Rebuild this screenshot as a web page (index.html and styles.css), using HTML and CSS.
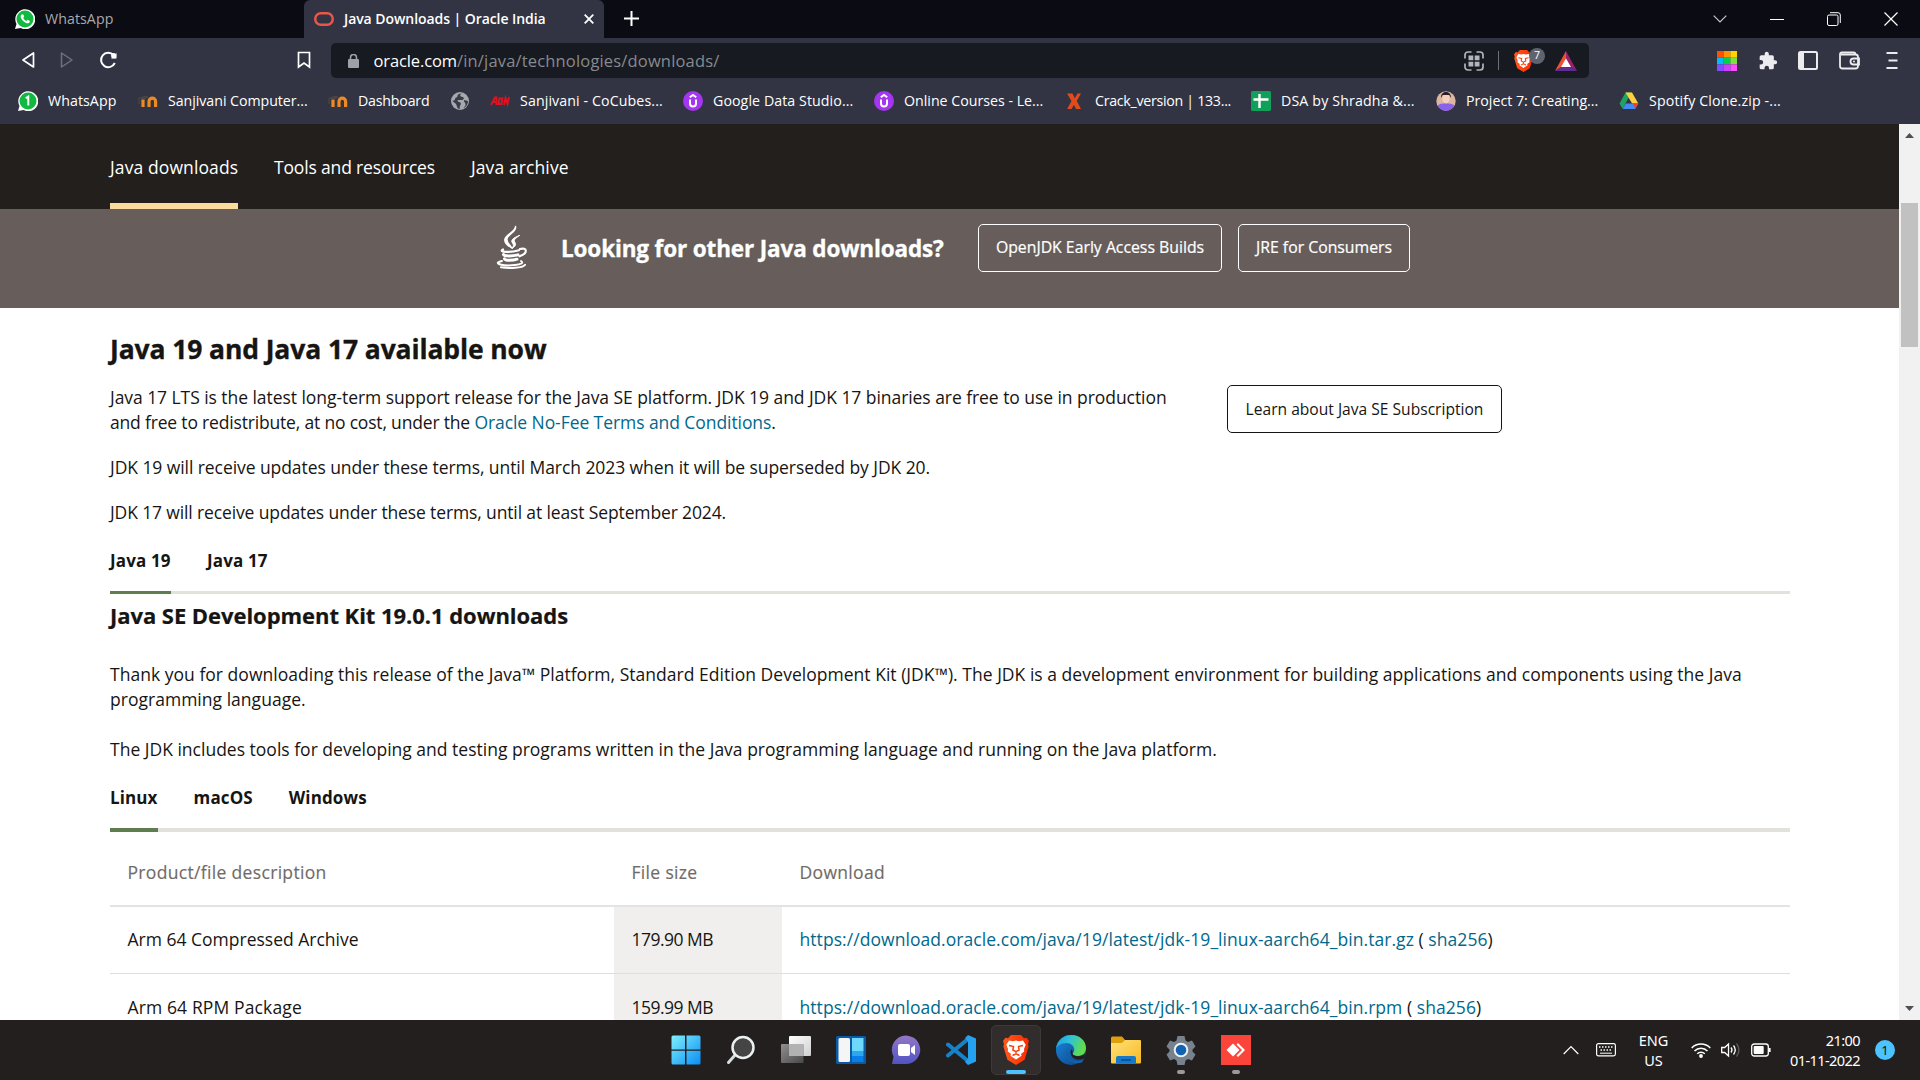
FILE: index.html
```html
<!DOCTYPE html>
<html lang="en">
<head>
<meta charset="utf-8">
<title>Java Downloads | Oracle India</title>
<link rel="stylesheet" href="styles.css">
</head>
<body>
<svg class="defs" width="0" height="0">
  <defs>
    <linearGradient id="gWin" x1="0" y1="0" x2="1" y2="1"><stop offset="0" stop-color="#7ff0fc"/><stop offset="1" stop-color="#0a8df5"/></linearGradient>
    <linearGradient id="gChat" x1="0" y1="0" x2="0" y2="1"><stop offset="0" stop-color="#9476c6"/><stop offset="1" stop-color="#4f54c4"/></linearGradient>
    <linearGradient id="gEdge" x1="0" y1="0" x2="1" y2=".3"><stop offset="0" stop-color="#1d9be8"/><stop offset=".5" stop-color="#2fc3d6"/><stop offset="1" stop-color="#61dd4c"/></linearGradient>
    <linearGradient id="gEdge2" x1="0" y1="0" x2="1" y2="1"><stop offset="0" stop-color="#1989dc"/><stop offset="1" stop-color="#0c3f86"/></linearGradient>
    <linearGradient id="gFold" x1="0" y1="0" x2="1" y2="1"><stop offset="0" stop-color="#ffe27a"/><stop offset="1" stop-color="#f9b824"/></linearGradient>
    <linearGradient id="gLight" x1="0" y1="0" x2="1" y2="1"><stop offset="0" stop-color="#fff"/><stop offset="1" stop-color="#cfcfcf"/></linearGradient>
    <linearGradient id="gDark" x1="0" y1="0" x2="1" y2="1"><stop offset="0" stop-color="#9a9a9a"/><stop offset="1" stop-color="#4c4c4c"/></linearGradient>
    <linearGradient id="gBrave" x1="0" y1="0" x2="1" y2="0"><stop offset="0" stop-color="#ff5a1f"/><stop offset="1" stop-color="#fa2a00"/></linearGradient>
    <symbol id="brave" viewBox="0 0 26 30">
      <path fill="url(#gBrave)" d="M8 0h10l3 3.200 2.600-.4L26 6l-1 3 .6 2.600-4 13.200L13 30l-8.600-5.200-4-13.200L1 9 0 6l2.400-3.200 2.600.4z"/>
      <path fill="#fff" d="M6 5.500l4 .7 3-.7 3 .7 4-.7 2.700 4.200-1.700 4.300.2 2.600-3.200 2.500.6 1.700L13 24.500l-5.600-3.700.6-1.700-3.200-2.500.2-2.600-1.700-4.300z"/>
      <path fill="none" stroke="#f9400d" stroke-width="1.500" d="M6 10.500l4.500 1-.6 3.500 3.100 1.600 3.100-1.600-.6-3.500 4.500-1M13 16v3M9.500 20.500l3.500-1.700 3.500 1.700"/>
    </symbol>
    <symbol id="udemy" viewBox="0 0 20 20"><circle cx="10" cy="10" r="10" fill="#a435f0"/><path d="M6.800 6.200L10 4l3.200 2.200M7 8.500v4a3 3 0 0 0 6 0v-4" fill="none" stroke="#fff" stroke-width="2"/></symbol>
    <symbol id="moodle" viewBox="0 0 20 20"><path d="M5 16V8.500M11 16v-5.500a3.300 3.300 0 0 1 6.600 0V16" fill="none" stroke="#ed8a24" stroke-width="3.200"/><path d="M0 7l8-2.500 3 1.700L6 8.500z" fill="#4a4643"/><path d="M1 7v6" stroke="#4f4844"/></symbol>
  </defs>
</svg>

<header class="browser">
  <div class="tabstrip">
    <div class="tab">
      <svg width="20" height="20" viewBox="0 0 20 20"><path d="M0 20l1.500-5A10 10 0 1 1 5.500 19z" fill="#fff"/><circle cx="10" cy="10" r="8.500" fill="#12b941"/><path d="M6.500 5.500c-2 2 0 5 2 6.700s4.500 3 6 1.300l.3-1.500-2.200-1.200-1.100 1.200c-1.500-.5-2.800-1.800-3.300-3.200l1-1-.8-2.300z" fill="#fff"/></svg>
      <span>WhatsApp</span>
    </div>
    <div class="tab active">
      <svg width="20" height="14" viewBox="0 0 20 14"><rect x="1.300" y="1.300" width="17.400" height="11.400" rx="5.500" fill="none" stroke="#e8574a" stroke-width="2.500"/></svg>
      <span>Java Downloads | Oracle India</span>
      <svg class="close" width="10" height="10" viewBox="0 0 10 10"><path d="M.7.7l8.600 8.600M9.300.7L.7 9.300" stroke="#fff" stroke-width="1.800"/></svg>
    </div>
    <svg class="plus" width="15" height="15" viewBox="0 0 15 15"><path d="M7.500 0v15M0 7.500h15" stroke="#fff" stroke-width="2"/></svg>
    <div class="winctl">
      <svg width="14" height="14" viewBox="0 0 14 14"><path d="M.7 3.700L7 10l6.300-6.300" fill="none" stroke="#c8c8cc" stroke-width="1.200"/></svg>
      <svg width="14" height="14" viewBox="0 0 14 14"><path d="M0 7.500h14" stroke="#fff"/></svg>
      <svg width="14" height="14" viewBox="0 0 14 14"><rect x=".5" y="3" width="10.500" height="10.500" rx="1.500" fill="none" stroke="#fff"/><path d="M3 .7h8a2.300 2.300 0 0 1 2.300 2.300v8" fill="none" stroke="#fff"/></svg>
      <svg width="14" height="14" viewBox="0 0 14 14"><path d="M.5.5l13 13M13.500.5l-13 13" stroke="#fff" stroke-width="1.200"/></svg>
    </div>
  </div>

  <div class="toolbar">
    <div class="nav-icons">
      <svg width="14" height="18" viewBox="0 0 14 18"><path d="M12.500 2v14L2 9z" fill="none" stroke="#fff" stroke-width="1.700" stroke-linejoin="round"/></svg>
      <svg width="14" height="18" viewBox="0 0 14 18"><path d="M1.500 2v14L12 9z" fill="none" stroke="#6f717c" stroke-width="1.500" stroke-linejoin="round"/></svg>
      <svg width="18" height="18" viewBox="0 0 18 18"><path d="M14.500 4A7.200 7.200 0 1 0 15.800 12" fill="none" stroke="#fff" stroke-width="2"/><path d="M17.500 2v5.500H12z" fill="#fff"/><circle cx="14.700" cy="4.700" r="2.600" fill="#fff"/></svg>
      <svg class="mark" width="14" height="18" viewBox="0 0 14 18"><path d="M1.500 1.500h11v14.500L7 12l-5.500 4z" fill="none" stroke="#fff" stroke-width="1.700"/></svg>
    </div>
    <div class="address">
      <svg width="11" height="14" viewBox="0 0 11 14"><rect y="5" width="11" height="9" rx="1" fill="#9ea1a9"/><path d="M2.500 6V3.500a3 3 0 0 1 6 0V6" fill="none" stroke="#9ea1a9" stroke-width="1.600"/></svg>
      <div class="url"><span class="host">oracle.com</span><span class="path">/in/java/technologies/downloads/</span></div>
      <div class="shields">
        <svg width="20" height="20" viewBox="0 0 20 20"><path d="M7.500 1H4a3 3 0 0 0-3 3v3.500M12.500 1H16a3 3 0 0 1 3 3v3.500M7.500 19H4a3 3 0 0 1-3-3v-3.500M12.500 19H16a3 3 0 0 0 3-3v-3.500" fill="none" stroke="#b4b5ba" stroke-width="1.700"/><path d="M4.500 4.500h4.800v4.800H4.500zM10.700 4.500h4.800v4.800h-4.800zM4.500 10.700h4.800v4.800H4.500zM10.700 10.700h4.800v4.800h-4.800z" fill="#b4b5ba"/></svg>
        <i class="sep"></i>
        <div class="lion"><svg width="19" height="22"><use href="#brave"/></svg><b>7</b></div>
        <svg width="22" height="20" viewBox="0 0 22 20"><path d="M11 0L0 20l11-7z" fill="#f1502f"/><path d="M11 0l11 20-11-7z" fill="#97216b"/><path d="M0 20h22l-11-7z" fill="#5f2d91"/><path d="M11 7.500l5 8.500H6z" fill="#fff"/></svg>
      </div>
    </div>
    <div class="extensions">
      <svg width="20" height="20" viewBox="0 0 21 21"><path fill="#ff4f00" d="M0 0h7v7H0z"/><path fill="#ff9300" d="M7 0h7v7H7z"/><path fill="#ffd500" d="M14 0h7v7h-7z"/><path fill="#00bdf5" d="M0 7h7v7H0z"/><path fill="#00d04c" d="M7 7h7v7H7z"/><path fill="#7fe044" d="M14 7h7v7h-7z"/><path fill="#824dff" d="M0 14h7v7H0z"/><path fill="#c743ff" d="M7 14h7v7H7z"/><path fill="#fb4cff" d="M14 14h7v7h-7z"/></svg>
      <svg width="20" height="20" viewBox="0 0 24 24" fill="#ececee"><path d="M20.500 11H19V7a2 2 0 0 0-2-2h-4V3.500a2.500 2.500 0 0 0-5 0V5H4a2 2 0 0 0-2 2v3.800h1.500a2.700 2.700 0 0 1 0 5.400H2V20a2 2 0 0 0 2 2h3.800v-1.500a2.700 2.700 0 0 1 5.400 0V22H17a2 2 0 0 0 2-2v-4h1.500a2.500 2.500 0 0 0 0-5z"/></svg>
      <svg width="20" height="19" viewBox="0 0 20 19"><rect x="1" y="1" width="18" height="17" rx="1.500" fill="none" stroke="#ececee" stroke-width="2"/><path d="M1 1h5v17H1z" fill="#ececee"/></svg>
      <svg width="21" height="19" viewBox="0 0 21 19"><path d="M2 3.500h14.500a2.500 2.500 0 0 1 2.500 2.500v9a2.500 2.500 0 0 1-2.500 2.500h-13A2.500 2.500 0 0 1 1 15V3.500A2 2 0 0 1 3 1.300h11.500a2 2 0 0 1 2 2M20 7.500h-5.500a3 3 0 0 0 0 6H20z" fill="none" stroke="#ececee" stroke-width="1.800"/><circle cx="15" cy="10.500" r="1" fill="#ececee"/></svg>
      <svg class="menu" width="12" height="17" viewBox="0 0 12 17"><path d="M.5 1h11M2.500 8.500h9M.5 16h11" stroke="#ececee" stroke-width="1.800"/></svg>
    </div>
  </div>

  <div class="bookmarks">
    <div><svg width="20" height="20" viewBox="0 0 20 20"><path d="M0 20l1.500-5A10 10 0 1 1 5.500 19z" fill="#fff"/><circle cx="10" cy="10" r="8.500" fill="#12b941"/><path d="M7.700 7.300l2.600-1.800v9" fill="none" stroke="#fff" stroke-width="1.900"/></svg><span>WhatsApp</span></div>
    <div><svg width="20" height="20"><use href="#moodle"/></svg><span>Sanjivani Computer...</span></div>
    <div><svg width="20" height="20"><use href="#moodle"/></svg><span>Dashboard</span></div>
    <div><svg width="20" height="20" viewBox="0 0 20 20"><circle cx="10" cy="10" r="9" fill="#a6a8ae"/><path d="M12 2.500c-3 1-2 3 .5 3.500s1 3-.5 3H8.500c-1.500 0-1 2 .5 2s2.500 1.500 1.500 3-1 2.500-.5 4c-4-.5-2.500-4-4.500-5.500S2 9.500 2 9.500c1.500.5 3 0 3-1.500s2.500-1.500 2.500-3 1-2.500 4.500-2.500zM14 9l4 1c0 4-2.500 6.500-4.500 7.200 1-2.200 2.500-2.200 2-4.200s-2-2-1.500-4z" fill="#393b48"/></svg></div>
    <div><svg width="20" height="20" viewBox="0 0 20 20"><path d="M1 14L5 6.500h1.500V14M3 11h3.500M9.500 7.500h3l-1 5.500h-3zM14 14l1.500-7 2 6L19 6" fill="none" stroke="#e01222" stroke-width="1.900"/></svg><span>Sanjivani - CoCubes...</span></div>
    <div><svg width="20" height="20"><use href="#udemy"/></svg><span>Google Data Studio...</span></div>
    <div><svg width="20" height="20"><use href="#udemy"/></svg><span>Online Courses - Le...</span></div>
    <div><svg width="20" height="20" viewBox="0 0 20 20"><path d="M2 2.500h5.500l2.300 4.700 2.700-4.700H16l-4.300 7.500 4.300 8h-5l-2-4.300L6.500 18H2.200L6.500 10z" fill="#e14b1c"/></svg><span>Crack_version | 133...</span></div>
    <div><svg width="20" height="20" viewBox="0 0 20 20"><rect width="20" height="20" rx="1.500" fill="#10a05a"/><path d="M8.500 3v14M2.500 8.500h15" stroke="#fff" stroke-width="2.400"/></svg><span>DSA by Shradha &amp;...</span></div>
    <div><svg width="20" height="20" viewBox="0 0 20 20"><circle cx="10" cy="10" r="9.700" fill="#dcb6a0"/><path d="M1.500 14.500C5 11.500 15 11.500 18.500 14.500 15 21.500 5 21.500 1.500 14.500z" fill="#8a62ec"/><ellipse cx="10" cy="7.500" rx="3.700" ry="5" fill="#f2d0bd"/><path d="M5 7C4.500-1 15.500-1 15 7l-1.700-3H6.700z" fill="#2c2028"/></svg><span>Project 7: Creating...</span></div>
    <div><svg width="20" height="20" viewBox="0 0 20 20"><path d="M6.500 1.500h6L7.300 11l-3.500 7L.5 12.500z" fill="#1ea362"/><path d="M6.500 1.500h6.500l6.300 11h-6.200z" fill="#ffcf3f"/><path d="M6.700 12.500h12.500L16.200 18H3.800z" fill="#4688f4"/><path d="M13.500 12.500h5.800L16.500 17.500z" fill="#ea4335"/></svg><span>Spotify Clone.zip -...</span></div>
  </div>
</header>

<div class="viewport">
  <div class="page">
    <nav class="subnav">
      <a class="current">Java downloads</a>
      <a>Tools and resources</a>
      <a>Java archive</a>
    </nav>
    <section class="banner">
      <svg class="java" width="34" height="44" viewBox="0 0 34 44" fill="none" stroke="#fff" stroke-linecap="round">
        <path d="M20.500 1c2.500 5.500-8.500 8.500-8.500 13.500 0 3.500 3.800 5.500 4.800 8.500-4.300-2.200-8.300-5.200-6.800-9.600C11.500 9 20.500 6.500 20.500 1z" fill="#fff" stroke-width="1.100"/>
        <path d="M24.500 10.500c-7 2.500-9 5-7 7.500 1.500 2 1 3.500-.5 5.500 4-2.500 4.200-4.200 2.700-6.500-1.200-2 .3-3.500 4.800-6.500z" fill="#fff" stroke-width="1"/>
        <path d="M8 24.500c-5 2.500 7 3.500 16 .7M25 24c7-2 8.500 4-.5 7.300" stroke-width="2.200"/>
        <path d="M8.500 29.500c1 2 9 1.700 14.500.4M9.500 33.800c1 2 8 1.900 12.500.4" stroke-width="3"/>
        <path d="M7 36c-11 2.500 2 5.300 13 4 6-.5 9-2.200 6-4M6 42.300c9 1.300 21 .8 24-2.500" stroke-width="2"/>
      </svg>
      <h2>Looking for other Java downloads?</h2>
      <a class="btn b1">OpenJDK Early Access Builds</a>
      <a class="btn b2">JRE for Consumers</a>
    </section>

    <main>
      <h1>Java 19 and Java 17 available now</h1>
      <div class="intro">
        <div class="copy">
          <p><span class="l1">Java 17 LTS is the latest long-term support release for the Java SE platform. JDK 19 and JDK 17 binaries are free to use in production</span><br><span class="l2">and free to redistribute, at no cost, under the <a>Oracle No-Fee Terms and Conditions</a>.</span></p>
          <p class="l3">JDK 19 will receive updates under these terms, until March 2023 when it will be superseded by JDK 20.</p>
          <p class="l4">JDK 17 will receive updates under these terms, until at least September 2024.</p>
        </div>
        <a class="btn dark">Learn about Java SE Subscription</a>
      </div>

      <div class="tabs versions"><span class="on">Java 19</span><span>Java 17</span></div>
      <h3>Java SE Development Kit 19.0.1 downloads</h3>
      <p class="thanks">Thank you for downloading this release of the Java™ Platform, Standard Edition Development Kit (JDK™). The JDK is a development environment for building applications and components using the Java<br>programming language.</p>
      <p class="tools">The JDK includes tools for developing and testing programs written in the Java programming language and running on the Java platform.</p>
      <div class="tabs systems"><span class="on">Linux</span><span>macOS</span><span>Windows</span></div>

      <div class="table">
        <div class="row head"><div>Product/file description</div><div>File size</div><div>Download</div></div>
        <div class="row r1"><div>Arm 64 Compressed Archive</div><div class="size">179.90 MB</div><div><a>https://download.oracle.com/java/19/latest/jdk-19_linux-aarch64_bin.tar.gz</a> ( <a>sha256</a>)</div></div>
        <div class="row r2"><div>Arm 64 RPM Package</div><div class="size">159.99 MB</div><div><a>https://download.oracle.com/java/19/latest/jdk-19_linux-aarch64_bin.rpm</a> ( <a>sha256</a>)</div></div>
      </div>
    </main>
  </div>
  <div class="scrollbar">
    <svg width="9" height="5" viewBox="0 0 9 5"><path d="M0 5l4.500-5L9 5z" fill="#505050"/></svg>
    <i class="thumb"></i>
    <svg width="9" height="5" viewBox="0 0 9 5"><path d="M0 0l4.500 5L9 0z" fill="#505050"/></svg>
  </div>
</div>

<footer class="taskbar">
  <div class="apps">
    <div><svg width="30" height="30" viewBox="0 0 30 30"><path d="M2 .5h12v14H.5V2A1.500 1.500 0 0 1 2 .5zM15.500.5H28A1.500 1.500 0 0 1 29.500 2v12.500h-14zM.5 15.700H14v13.800H2A1.500 1.500 0 0 1 .5 28zM15.500 15.700h14V28a1.500 1.500 0 0 1-1.500 1.500H15.500z" fill="url(#gWin)"/></svg></div>
    <div><svg width="30" height="30" viewBox="0 0 30 30"><path d="M9.500 19.500L2.500 27.500" stroke="#d9dcdf" stroke-width="3" stroke-linecap="round"/><circle cx="17" cy="12.500" r="10.500" fill="#454545" stroke="#eceef0" stroke-width="2.500"/></svg></div>
    <div><svg width="30" height="30" viewBox="0 0 30 30"><rect x="8" y="1" width="22" height="20" rx="1" fill="url(#gLight)"/><rect y="9" width="22.500" height="19" rx="1" fill="url(#gDark)" opacity=".92"/><path d="M8 9h14.500v12H8z" fill="#b2b2b2"/></svg></div>
    <div><svg width="30" height="30" viewBox="0 0 30 30"><rect y="1" width="30" height="28" rx="1.500" fill="#0c59a4"/><rect x="2.500" y="3" width="11.500" height="24" rx="1.500" fill="#f5f5f5"/><path d="M16 3h11.500v13H16z" fill="#6bd8fc"/><path d="M16 16h11.500v5H16z" fill="#2ca6ed"/><path d="M16 21h11.500v6H16z" fill="#087fe7"/></svg></div>
    <div><svg width="30" height="30" viewBox="0 0 30 30"><path d="M1 29l1.500-7.500A14.200 14.200 0 1 1 15 29z" fill="url(#gChat)"/><rect x="7" y="9" width="12" height="12" rx="2" fill="#fff"/><path d="M20 13l4-3v10l-4-3z" fill="#fff"/></svg></div>
    <div><svg width="30" height="30" viewBox="0 0 30 30"><path d="M2 20.500L22 4M2 9.500L22 26" stroke="#1683c9" stroke-width="4" stroke-linecap="round"/><path d="M22 0l8 3.500v23L22 30l-3-3 3-3.500v-17L19 3z" fill="#25a2ef"/></svg></div>
    <div class="running"><svg width="26" height="30"><use href="#brave"/></svg><i></i></div>
    <div><svg width="30" height="30" viewBox="0 0 30 30"><circle cx="15" cy="15" r="15" fill="url(#gEdge2)"/><path d="M0 14C1 4.500 8 0 15.500 0 24 0 30 6 30 13c0 5-3.500 8-8 8-3.500 0-5.500-1-5.500-2.200 0-.8 1.800-1.500 1.800-4C18.300 11 15 8 10.500 8 5 8 1 11 0 14z" fill="url(#gEdge)"/><path d="M12 13c-3 7 2.500 13.500 9.500 13 3 0 5.500-1.500 7-3l-2.500 4.500c-7 2-15-1-16-8-.3-3 .5-5 2-6.500z" fill="#1561a8"/><path d="M16.500 18.500c1 3.500 9 3.500 12.500 0l-.5 4.500c-5 3-12 1.500-13.500-3.500-.7-2.500-.5-4 .5-5 1.500 1 1 2.500 1 4z" fill="#231f1f"/></svg></div>
    <div><svg width="30" height="30" viewBox="0 0 30 30"><path d="M0 3a1.500 1.500 0 0 1 1.500-1.500H11L14 5v5H0z" fill="#dfa00c"/><path d="M0 8h11l3-3h15a1 1 0 0 1 1 1v21.500a1 1 0 0 1-1 1H1a1 1 0 0 1-1-1z" fill="url(#gFold)"/><path d="M5 28.500V23a2 2 0 0 1 2-2h16a2 2 0 0 1 2 2v5.500z" fill="#1578ca"/><path d="M10 25h10" stroke="#0b4a86" stroke-width="1.500"/></svg></div>
    <div class="open"><svg width="30" height="30" viewBox="0 0 30 30"><path d="M11.500 1h7l1 4.500 2.500 1.500 4-1.500 3.500 6-3 3v2l3 3-3.500 6-4-1.500-2.500 1.500-1 4.500h-7l-1-4.500L8 24l-4 1.500-3.500-6 3-3v-2l-3-3L4 5.500 8 7l2.500-1.500z" fill="#77828c"/><circle cx="15" cy="15" r="6.300" fill="#1262b3" stroke="#eef1f4" stroke-width="2"/></svg><i></i></div>
    <div class="open"><svg width="30" height="30" viewBox="0 0 30 30"><path fill="#fb443a" d="M0 0h30v30H0z"/><path d="M12 8.500l6.500 6.500-6.500 6.500L5.500 15z" fill="#fff"/><path d="M15.500 9.500L17 8l7 7-7 7-1.500-1.500L21 15z" fill="#fff"/></svg><i></i></div>
  </div>
  <div class="tray">
    <svg class="up" width="16" height="10" viewBox="0 0 16 10"><path d="M.7 9L8 1.500 15.300 9" fill="none" stroke="#fff" stroke-width="1.200"/></svg>
    <svg class="kbd" width="20" height="14" viewBox="0 0 20 14"><rect x=".6" y=".6" width="18.800" height="12.300" rx="1.800" fill="none" stroke="#fff" stroke-width="1.200"/><path d="M3 4h14M4.500 7h11" stroke="#fff" stroke-width="1.300" stroke-dasharray="1.500 1.500"/><path d="M4 10.200h12" stroke="#fff"/></svg>
    <div class="lang">ENG<br>US</div>
    <svg class="wifi" width="20" height="16" viewBox="0 0 20 16"><path d="M.7 6a13 13 0 0 1 18.600 0M3.500 9a9 9 0 0 1 13 0M6.200 11.800a5.400 5.400 0 0 1 7.600 0" fill="none" stroke="#fff" stroke-width="1.500"/><circle cx="10" cy="14" r="1.900" fill="#fff"/></svg>
    <svg class="snd" width="20" height="16" viewBox="0 0 20 16"><path d="M.7 5.500h3L7.500 2v12L3.700 10.500h-3z" fill="none" stroke="#fff" stroke-width="1.300"/><path d="M10 5.500q2 2.500 0 5M12.500 3.500q3.500 4.500 0 9" fill="none" stroke="#fff" stroke-width="1.300"/><path d="M15.500 1.500q5 6.500 0 13" fill="none" stroke="#5d5a5a" stroke-width="1.300"/></svg>
    <svg class="bat" width="20" height="14" viewBox="0 0 20 14"><rect x=".7" y="1" width="16.600" height="12" rx="2.500" fill="none" stroke="#fff" stroke-width="1.300"/><rect x="2.700" y="3" width="10" height="8" rx="1" fill="#fff"/><path d="M18.700 5v4" stroke="#fff" stroke-width="1.800"/></svg>
    <div class="clock">21:00<br>01-11-2022</div>
    <b class="count">1</b>
  </div>
</footer>
</body>
</html>
```
FILE: styles.css
```css
* { box-sizing: border-box; }
body { margin: 0; width: 1920px; height: 1080px; overflow: hidden; display: flex; flex-direction: column; font-family: "Open Sans", "Noto Sans", sans-serif; background: #fff; color: #161513; }
svg { display: block; flex: none; }
.defs { position: absolute; }
h1, h2, h3, p { margin: 0; }

/* Browser window */
.browser { height: 124px; flex: none; background: #323443; color: #fff; }
.tabstrip { height: 38px; background: #0b0b14; display: flex; align-items: center; padding-bottom: 1px; }
.tab { height: 37px; width: 304px; padding-left: 15px; display: flex; align-items: center; gap: 10px; font-size: 14.2px; letter-spacing: .07px; color: #a9a9ad; }
.tab span { padding-bottom: 1px; }
.tab.active { height: 38px; margin-bottom: -1px; width: 300px; padding: 0 10px 1px; background: #323443; border-radius: 6px 6px 0 0; color: #fff; font-weight: 600; font-size: 14px; letter-spacing: -.06px; white-space: nowrap; }
.tab .close { margin-left: auto; }
.plus { margin-left: 20px; }
.winctl { margin-left: auto; width: 207px; padding-right: 22px; display: flex; justify-content: space-between; }
.toolbar { height: 45px; display: flex; align-items: center; }
.nav-icons { width: 331px; padding: 0 0 2px 21px; display: flex; align-items: center; gap: 25px; }
.nav-icons .mark { margin-left: auto; margin-right: 20px; }
.address { width: 1258px; height: 35px; background: #171a20; border-radius: 5px; display: flex; align-items: center; padding: 0 12px 0 17px; font-size: 16.500px; }
.url { margin-left: 14.500px; white-space: nowrap; }
.host { letter-spacing: -.11px; }
.path { color: #878a90; letter-spacing: .17px; }
.shields { margin-left: auto; display: flex; align-items: center; }
.sep { width: 1px; height: 19px; background: #6d7077; margin: 0 15px 0 14px; }
.lion { position: relative; width: 41px; }
.lion b { position: absolute; left: 15px; top: -2px; width: 16px; height: 16px; border-radius: 8px; background: #5f6370; font: 10.500px/15px "Open Sans", sans-serif; text-align: center; }
.extensions { margin-left: auto; width: 203px; display: flex; align-items: center; gap: 20.500px; }
.extensions .menu { margin-left: 6px; }
.bookmarks { height: 35px; padding-left: 18px; display: grid; grid-template-columns: 120px 190px 122px 40px 193px 191px 191px 186px 185px 183px 200px; align-items: center; font-size: 14.200px; }
.bookmarks div { display: flex; align-items: center; gap: 10px; white-space: nowrap; }
.bookmarks span { padding-bottom: 1px; }
.bookmarks div:nth-child(1) { letter-spacing: .07px; }
.bookmarks div:nth-child(2) { letter-spacing: -.04px; }
.bookmarks div:nth-child(3) { letter-spacing: -.2px; }
.bookmarks div:nth-child(5) { letter-spacing: .11px; }
.bookmarks div:nth-child(6) { letter-spacing: .08px; }
.bookmarks div:nth-child(8) { letter-spacing: -.28px; }
.bookmarks div:nth-child(9) { letter-spacing: .15px; }
.bookmarks div:nth-child(11) { letter-spacing: .13px; }

/* Web page */
.viewport { height: 896px; flex: none; display: flex; overflow: hidden; }
.page { width: 1899px; font-size: 17.500px; line-height: 25px; }
.subnav { height: 85px; background: #221f1c; color: #fff; padding-left: 110px; display: flex; gap: 36px; }
.subnav a { padding-top: 31px; white-space: nowrap; letter-spacing: .11px; }
.subnav a:nth-child(2) { letter-spacing: -.16px; }
.subnav .current { width: 128px; border-bottom: 6px solid #fadc9c; }
.banner { height: 99px; background: #675e5b; color: #fff; display: flex; align-items: flex-start; padding: 15px 0 0 495px; }
.java { margin-top: 1px; }
.banner h2 { margin: 11px 0 0 32px; width: 417px; font-size: 22.500px; line-height: 28px; letter-spacing: -.14px; white-space: nowrap; -webkit-text-stroke: .35px; }
.btn { height: 48px; border: 1px solid #fff; border-radius: 5px; font-size: 15.800px; line-height: 44px; text-align: center; white-space: nowrap; -webkit-text-stroke: .2px; }
.b1 { width: 244px; margin-right: 16px; }
.b2 { width: 172px; }
.btn.dark { width: 275px; border-color: #161513; font-size: 15.600px; line-height: 46px; -webkit-text-stroke: 0; }
main { padding: 21px 109px 0 110px; }
main a:not(.btn) { color: #00688c; }
h1 { font-size: 26.500px; line-height: 40px; letter-spacing: -.11px; -webkit-text-stroke: .35px; }
.intro { display: flex; padding-top: 16px; }
.copy { width: 1117px; white-space: nowrap; }
.copy p + p { margin-top: 20px; }
.l1 { letter-spacing: -.056px; }
.l2 { letter-spacing: -.18px; }
.l2 a, .l3 { letter-spacing: -.07px; }
.l4 { letter-spacing: -.13px; }
.tabs { display: flex; gap: 36px; font-size: 17px; font-weight: 700; }
.versions { margin-top: 23px; height: 46px; box-shadow: inset 0 -3px #e3e1dc; letter-spacing: .14px; }
.versions .on { width: 61px; box-shadow: inset 0 -3px #5f7d4f; }
.systems { margin-top: 23px; height: 47px; box-shadow: inset 0 -4px #e3e1dc; letter-spacing: .12px; }
.systems .on { box-shadow: inset 0 -4px #5f7d4f; }
h3 { margin-top: 6px; font-size: 22px; line-height: 30px; letter-spacing: -.05px; -webkit-text-stroke: .2px; }
.thanks { margin-top: 32px; white-space: nowrap; letter-spacing: .025px; }
.tools { margin-top: 25px; letter-spacing: .005px; }
.row { display: grid; grid-template-columns: 504px 168px 1fr; height: 67px; border-bottom: 1px solid #dedede; line-height: 65px; white-space: nowrap; }
.row > div { padding-left: 17.500px; }
.row.head { height: 75px; line-height: 80px; border-bottom: 2px solid #e3e3e3; color: #6f6b68; letter-spacing: .33px; -webkit-text-stroke: .15px; }
.row.r2 { line-height: 66px; }
.row .size { background: #f0efed; letter-spacing: -.52px; }
.row:not(.head) div:last-child { letter-spacing: .06px; }
.row.r2 > div:first-child { letter-spacing: .13px; }
.scrollbar { width: 21px; background: #f1f1f1; display: flex; flex-direction: column; align-items: center; padding: 9px 0; }
.thumb { width: 17px; height: 144px; margin: 65px 0 auto; background: #c1c1c1; }

/* Desktop taskbar */
.taskbar { height: 60px; flex: none; background: #231f1f; color: #fff; display: flex; padding-left: 658px; }
.apps { display: flex; align-items: center; }
.apps div { width: 55px; height: 60px; display: flex; align-items: center; justify-content: center; position: relative; }
.apps i { position: absolute; bottom: 6px; width: 8px; height: 4px; border-radius: 2px; background: #9b9999; }
.apps .running { width: 50px; height: 50px; margin: 0 2.500px; background: #312d2d; border: 1px solid #3d3939; border-radius: 5px; }
.apps .running i { bottom: 0; width: 20px; background: #4cc2ff; }
.tray { flex: 1; display: flex; align-items: center; padding-left: 300px; font: 14.500px/20px "Noto Sans", sans-serif; }
.kbd { margin-left: 17px; }
.lang { width: 75px; text-align: center; letter-spacing: -.1px; }
.snd { margin-left: 10px; }
.bat { margin-left: 10px; }
.clock { width: 89px; padding-bottom: 1px; text-align: right; letter-spacing: -.57px; }
.count { margin-left: 15px; width: 20px; height: 20px; border-radius: 10px; background: #4cc2ff; color: #111; font-weight: 400; font-size: 13px; text-align: center; }
```
